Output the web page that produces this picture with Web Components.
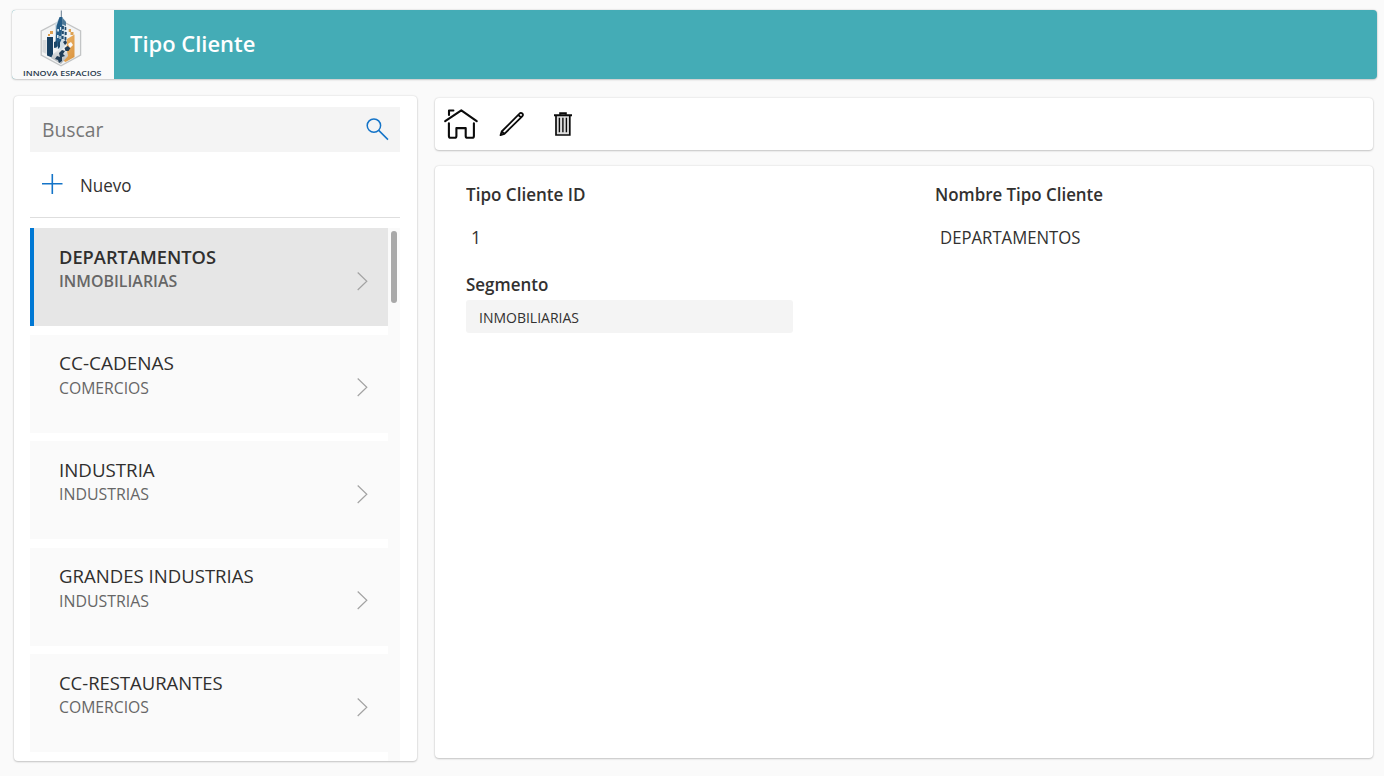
<!DOCTYPE html>
<html lang="es">
<head>
<meta charset="utf-8">
<title>Tipo Cliente</title>
<style>
html,body{margin:0;height:100%;background:#fafafa;overflow:hidden}
body{font-family:"Open Sans","Noto Sans",sans-serif;color:#323130}
</style>
</head>
<body>
<client-app></client-app>
<script>
const define = (name, html, init) => customElements.define(name, class extends HTMLElement {
  connectedCallback() {
    if (this.shadowRoot) return;
    this.attachShadow({mode: 'open'}).innerHTML = html;
    if (init) init(this, this.shadowRoot);
  }
});

// Single line of text, condensed to the width given in "fit".
define('fit-text', `
<style>
:host{display:block;white-space:nowrap;height:24px;line-height:24px}
span{display:inline-block;transform-origin:0 50%}
</style><span><slot></slot></span>`, (el, root) => {
  const span = root.querySelector('span');
  const w = parseFloat(el.getAttribute('fit'));
  const natural = span.getBoundingClientRect().width;
  if (w && natural) span.style.transform = `scaleX(${w / natural})`;
});

define('panel-card', `
<style>
:host{display:block;box-sizing:border-box;background:#fff;border-radius:4px;overflow:hidden;
box-shadow:0 0 2px rgba(0,0,0,.16),0 1px 2px rgba(0,0,0,.18)}
</style><slot></slot>`);

define('brand-logo', `
<style>
:host{display:flex;flex-direction:column;align-items:flex-start;width:101.5px;height:69px;background:#fafafa;flex:none}
svg{display:block;margin-left:24px;width:50px;height:59px}
fit-text{margin-left:11px;height:9px;line-height:9px;font-size:7.8px;font-weight:600;color:#26384b}
</style>
<svg viewBox="36 10 50 59">
<defs>
<linearGradient id="o" x1="0" y1="0" x2="1" y2="1"><stop offset="0" stop-color="#efbb72"/><stop offset="1" stop-color="#d9923c"/></linearGradient>
<linearGradient id="g" x1="0" y1="0" x2="0" y2="1"><stop offset="0" stop-color="#eef0f1"/><stop offset="1" stop-color="#a9aeb2"/></linearGradient>
</defs>
<path d="M61 20.5 80.6 31V55L61 65.8 41.2 55V31Z" fill="#f3f4f4" stroke="#c3c5c6" stroke-width="1.3"/>
<path d="M47 37h6v21l-6-2.5z" fill="#173f61"/><path d="M42.5 40h4v14l-4-2z" fill="#d8dadc"/><path d="M50 31h3v3h-3zM48 34h2v2h-2z" fill="#e0a050"/>
<path d="M67 39l7.5-4.5V57l-9 5-5-3 6-8z" fill="url(#o)"/>
<path d="M53 54l8-6 6 3 1 5-7 8-10-6z" fill="url(#g)"/>
<path d="M61.3 10.5v9" stroke="#526b80" stroke-width=".9"/>
<path d="M59.5 18h3.5l3 3v24l-5 5-6-2V24z" fill="#cfdde6"/>
<path d="M59.5 17h3v5l-1.2 18-3 6-3 2 1.2-22z" fill="#245c87"/>
<path d="M62.5 18l3.5 4v4l-4-2z" fill="#4c7898"/>
<path d="M57.2 29h1.8v2.5h-1.8zM57 35h1.6v3H57zM59.4 36h1.3v3h-1.3zM60 27h1.2v3H60z" fill="#dce7ee"/>
<path d="M62 26h1.9v3.2H62zM64.7 27h1.6v3h-1.6zM61.8 31h2v3h-2zM64.7 32h2v3h-2zM61.6 36h2v3h-2zM64.6 37h1.8v3h-1.8z" fill="#214c70"/>
<path d="M54 42l3-1v6l-3 1zM58 42l2-1v6l-2 2z" fill="#1c4769"/>
<path d="M68.7 29h2.3v3h-2.3zM70.5 32h3v3h-3z" fill="#dda253"/>
<path d="M59 53l3-3 3 1-2 3 2 2-3 1 0 4-3 2-1-3-3-1 2-3 3 1zM64.5 48l3-2 3 2-2 3-3 0zM63 42l3-2 1 3-2 2z" fill="#203d57"/>
<path d="M68 44l3-2 2 3-3 3z" fill="#fafafa"/>
</svg>
<fit-text fit="78.5">INNOVA ESPACIOS</fit-text>`);

define('app-header', `
<style>
:host{display:flex;height:69px;border-radius:4px;overflow:hidden;background:#44acb6;box-shadow:0 0 2px rgba(0,0,0,.2),0 1px 2px rgba(0,0,0,.15);flex:none}
fit-text{margin:21px 0 0 16px;color:#fff;font-size:22px;font-weight:600}
</style><brand-logo></brand-logo><fit-text fit="125.3"><slot></slot></fit-text>`);

define('search-box', `
<style>
:host{display:flex;justify-content:space-between;align-items:center;height:45px;background:#f4f4f4;color:#777;font-size:19.2px;padding:0 11px 0 11.5px;box-sizing:border-box}
fit-text{margin-top:1px}
svg{margin-bottom:2px}
</style><fit-text fit="61.5">Buscar</fit-text>
<svg width="24" height="24" viewBox="0 0 24 24" fill="none" stroke="#1474c8" stroke-width="1.5"><circle cx="8.9" cy="8.6" r="6.7"/><path d="M13.7 13.4 23 22.6"/></svg>`);

define('new-button', `
<style>
:host{display:flex;align-items:flex-start;height:65px;border-bottom:1px solid #dedede;box-sizing:content-box;font-size:18px}
svg{margin:22px 0 0 12px}
fit-text{margin:21px 0 0 17px}
</style><svg width="21" height="20" viewBox="0 0 21 20" stroke="#1474c8" stroke-width="1.6"><path d="M0 9.8H20.5M10.3 0V20"/></svg><fit-text fit="51.5">Nuevo</fit-text>`);

define('list-row', `
<style>
:host{display:flex;justify-content:space-between;box-sizing:border-box;height:98px;padding:16.8px 20px 0 28.6px;background:#fafafa;flex:none}
:host([selected]){background:#e6e6e6;border-left:4px solid #0078d4;padding-left:24.6px;font-weight:600}
.t{font-size:18.3px;color:#302f2e}.s{font-size:15.5px;color:#666;margin-top:.3px}
svg{margin-top:26px}
</style>
<div><fit-text class="t"></fit-text><fit-text class="s"></fit-text></div>
<svg width="11" height="20" viewBox="0 0 11 20" fill="none" stroke="#a3a3a3" stroke-width="1.2"><path d="M.7 1.5 9.8 10.3.7 19"/></svg>`, (el, root) => {
  root.querySelectorAll('fit-text').forEach((n, i) => {
    const [text, w] = el.getAttribute(i ? 'sub' : 'name').split('|');
    const f = document.createElement('fit-text');
    f.className = n.className; f.textContent = text; f.setAttribute('fit', w);
    n.replaceWith(f);
  });
});

define('record-list', `
<style>
:host{display:grid;grid-template-columns:358px 12px;height:533px;margin-top:10px;overflow:hidden}
.rows{display:flex;flex-direction:column;gap:8.5px}
.bar{background:#fafafa;padding:3px 0 0 3px}
.bar i{display:block;width:6px;height:72px;border-radius:3px;background:#a8a8a8}
</style><div class="rows"><slot></slot></div><div class="bar"><i></i></div>`);

define('tool-bar', `
<style>
:host{display:flex;align-items:flex-start}
svg{display:block;fill:none;stroke:#0b0b0b}
.h{margin:11px 0 0 9px}.p{margin:13px 0 0 21px}.d{margin:13.5px 0 0 28px}
</style>
<svg class="h" width="34" height="31" viewBox="0 0 34 31" stroke="#17191d" stroke-width="2.1" stroke-linecap="round" stroke-linejoin="round"><path d="M1.2 12.2 17.3 1.3 32.7 12.2M5 5.9V1.5H9.4M4.9 14.3V26.9Q4.9 28.8 6.8 28.8H10.5Q12.4 28.8 12.4 26.9V19.1H21.7V26.9Q21.7 28.8 23.6 28.8H28Q29.9 28.8 29.9 26.9V14.3"/></svg>
<svg class="p" width="26" height="26" viewBox="0 0 26 26" stroke-width="1.8" stroke-linejoin="round"><path d="M1.5 24.2 2.7 20.5 20.5 2.6Q21.9 1.1 23.3 2.5 24.7 3.9 23.2 5.3L5.4 22.9ZM2.7 20.5 5.4 22.9M19.3 3.9 21.9 6.5"/></svg>
<svg class="d" width="20" height="26" viewBox="0 0 20 26"><path d="M3 4H16.8V23H3Z" fill="#ddd" stroke="none"/><path d="M1 3.3H19" stroke-width="2"/><path d="M7.2 2.8V1.2H12.8V2.8" stroke-width="2"/><path d="M3 3.5V23H16.8V3.5" stroke-width="1.7"/><path d="M6.4 5.8V20.2M9.9 5.8V20.2M13.4 5.8V20.2" stroke-width="1.4"/></svg>`);

define('form-field', `
<style>
:host{display:block;font-size:18px}
.l{font-weight:600}
.v{margin:19px 0 0 4.5px;font-size:17.8px}
.box{margin-top:4px;height:33px;width:327px;border-radius:3px;background:#f4f4f4;font-size:13.7px;box-sizing:border-box;padding:6px 0 0 12.5px}
</style>
<div class="f"></div>`, (el, root) => {
  const [label, lw] = el.getAttribute('label').split('|');
  const [value, vw] = el.getAttribute('value').split('|');
  root.querySelector('.f').innerHTML = `<fit-text class="l" fit="${lw}">${label}</fit-text>
<div class="${el.hasAttribute('boxed') ? 'box' : 'v'}"><fit-text fit="${vw}">${value}</fit-text></div>`;
});

define('client-app', `
<style>
:host{display:flex;flex-direction:column;width:1384px;height:776px;box-sizing:border-box;padding:10px 7.5px 0 12px}
main{display:grid;grid-template-columns:403px 938px;column-gap:18px;padding:17px 0 0 2px;align-items:start}
.left{height:665px;padding:11px 17px 0 16px}
.right{display:grid;grid-template-rows:52px 592px;row-gap:16px;padding-top:2px}
.form{padding:16px 31px}
.grid{display:grid;grid-template-columns:469px 1fr;row-gap:23px}
</style>
<app-header>Tipo Cliente</app-header>
<main>
<panel-card class="left">
<search-box></search-box><new-button></new-button>
<record-list>
<list-row selected name="DEPARTAMENTOS|157" sub="INMOBILIARIAS|118.2"></list-row>
<list-row name="CC-CADENAS|115" sub="COMERCIOS|90"></list-row>
<list-row name="INDUSTRIA|95.7" sub="INDUSTRIAS|90"></list-row>
<list-row name="GRANDES INDUSTRIAS|194.7" sub="INDUSTRIAS|90"></list-row>
<list-row name="CC-RESTAURANTES|163.7" sub="COMERCIOS|90"></list-row>
</record-list>
</panel-card>
<div class="right">
<panel-card><tool-bar></tool-bar></panel-card>
<panel-card class="form"><div class="grid">
<form-field label="Tipo Cliente ID|119.5" value="1|10"></form-field>
<form-field label="Nombre Tipo Cliente|168" value="DEPARTAMENTOS|140.5"></form-field>
<form-field boxed label="Segmento|82.3" value="INMOBILIARIAS|100"></form-field>
</div></panel-card>
</div>
</main>`);
</script>
</body>
</html>
